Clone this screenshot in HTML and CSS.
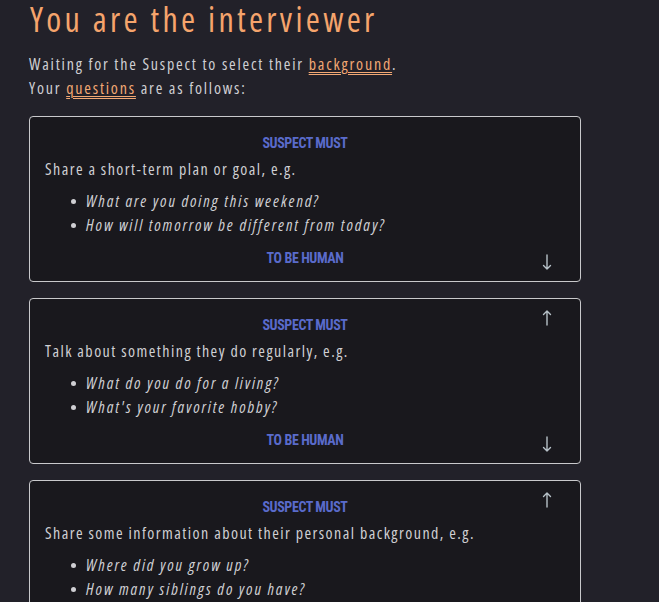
FILE: index.html
```html
<!DOCTYPE html>
<html lang="en">
<head>
<meta charset="utf-8">
<title>You are the interviewer</title>
<link rel="stylesheet" href="styles.css">
</head>
<body>
<main class="page">
  <h1 class="title">You are the interviewer</h1>
  <p class="intro">Waiting for the Suspect to select their <a class="link" href="#">background</a>.<br>Your <a class="link" href="#">questions</a> are as follows:</p>

  <section class="card">
    <div class="label">SUSPECT MUST</div>
    <p class="prompt">Share a short-term plan or goal, e.g.</p>
    <ul class="examples">
      <li>What are you doing this weekend?</li>
      <li>How will tomorrow be different from today?</li>
    </ul>
    <div class="label label-bottom">TO BE HUMAN</div>
    <svg class="arrow arrow-down" width="10" height="16" viewBox="0 0 10 16" aria-hidden="true"><path d="M5 1V15M1.5 11.5L5 15L8.5 11.5"/></svg>
  </section>

  <section class="card">
    <svg class="arrow arrow-up" width="10" height="16" viewBox="0 0 10 16" aria-hidden="true"><path d="M5 15V1M1.5 4.5L5 1L8.5 4.5"/></svg>
    <div class="label">SUSPECT MUST</div>
    <p class="prompt">Talk about something they do regularly, e.g.</p>
    <ul class="examples">
      <li>What do you do for a living?</li>
      <li>What's your favorite hobby?</li>
    </ul>
    <div class="label label-bottom">TO BE HUMAN</div>
    <svg class="arrow arrow-down" width="10" height="16" viewBox="0 0 10 16" aria-hidden="true"><path d="M5 1V15M1.5 11.5L5 15L8.5 11.5"/></svg>
  </section>

  <section class="card">
    <svg class="arrow arrow-up" width="10" height="16" viewBox="0 0 10 16" aria-hidden="true"><path d="M5 15V1M1.5 4.5L5 1L8.5 4.5"/></svg>
    <div class="label">SUSPECT MUST</div>
    <p class="prompt">Share some information about their personal background, e.g.</p>
    <ul class="examples">
      <li>Where did you grow up?</li>
      <li>How many siblings do you have?</li>
    </ul>
    <div class="label label-bottom">TO BE HUMAN</div>
  </section>
</main>
</body>
</html>
```
FILE: styles.css
```css
html, body {
  margin: 0;
  padding: 0;
  background: #222129;
}

body {
  font-family: "Open Sans", "DejaVu Sans", sans-serif;
  font-stretch: 75%;
  letter-spacing: 1.8px;
  color: #cfcfd3;
  font-size: 16px;
  line-height: 24px;
}

.page {
  width: 552px;
  margin: 0 0 0 29px;
  padding: 2px 0 40px;
}

.title {
  margin: 0 0 0 1px;
  font-weight: normal;
  font-size: 34px;
  letter-spacing: 3.3px;
  line-height: 34px;
  color: #f5a46c;
}

.intro {
  margin: 16px 0 16px;
}

.link {
  color: #f2a874;
  text-decoration: underline double;
  text-underline-offset: 2px;
  text-decoration-thickness: 1px;
}

.card {
  position: relative;
  background: #19181d;
  border: 1px solid #c9c9cc;
  border-radius: 4px;
  padding: 17px 15px 14px;
  margin-bottom: 16px;
}

.label {
  font-family: Roboto, "Liberation Sans", sans-serif;
  font-weight: 700;
  font-size: 14px;
  line-height: 18px;
  letter-spacing: -0.4px;
  text-align: center;
  color: #5a6bcb;
}

.label-bottom {
  margin-top: 12px;
}

.prompt {
  margin: 5px 0 0;
  letter-spacing: 1.45px;
}

.examples {
  list-style: none;
  margin: 8px 0 0;
  padding: 0 0 0 26px;
  font-style: italic;
  letter-spacing: 1.9px;
}

.examples li {
  display: flex;
  align-items: center;
}

.examples li::before {
  content: "";
  width: 5px;
  height: 5px;
  border-radius: 50%;
  background: #cfcfd3;
  margin-right: 10px;
  flex: none;
}

.arrow {
  position: absolute;
  right: 28px;
  fill: none;
  stroke: #b7c1c8;
  stroke-width: 1.4;
  stroke-linecap: round;
  stroke-linejoin: round;
}

.arrow-up {
  top: 11px;
}

.arrow-down {
  bottom: 11px;
}
```
